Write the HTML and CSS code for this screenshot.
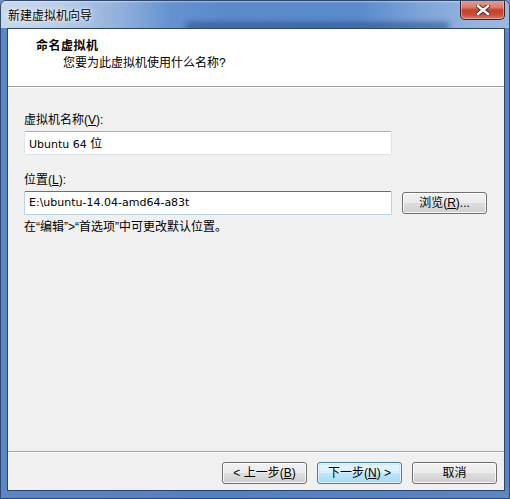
FILE: index.html
```html
<html>
  <head>
    <link rel="stylesheet" href="styles.css">
  </head>
  <body>
    <div class="window">
      <div class="titlebar">
        <span class="caption">新建虚拟机向导</span>
        <div class="blur-band"></div>
        <div class="close-btn">
          <svg width="14" height="10" viewBox="0 0 14 10">
            <path d="M2 1 L12 9 M12 1 L2 9" stroke="#3a2a2a" stroke-width="4.2" stroke-linecap="square"/>
            <path d="M2 1 L12 9 M12 1 L2 9" stroke="#ffffff" stroke-width="2.4" stroke-linecap="square"/>
          </svg>
        </div>
      </div>

      <div class="client">
        <div class="header">
          <div class="header-title">命名虚拟机</div>
          <div class="header-sub">您要为此虚拟机使用什么名称?</div>
        </div>

        <div class="content">
          <label class="field-label">虚拟机名称(<u>V</u>):</label>
          <div class="textbox">Ubuntu 64 <span class="cjk">位</span></div>

          <label class="field-label second">位置(<u>L</u>):</label>
          <div class="row">
            <div class="textbox hover">E:\ubuntu-14.04-amd64-a83t</div>
            <div class="button">浏览(<u>R</u>)...</div>
          </div>
          <div class="hint">在“编辑”&gt;“首选项”中可更改默认位置。</div>
        </div>

        <div class="footer">
          <div class="button">&lt; 上一步(<u>B</u>)</div>
          <div class="button default">下一步(<u>N</u>) &gt;</div>
          <div class="button">取消</div>
        </div>
      </div>
    </div>
  </body>
</html>
```

FILE: styles.css
```css
html, body {
  margin: 0;
  width: 100%;
  height: 100%;
  background: #6f93c9;
  font-family: 'Liberation Sans', 'Noto Sans CJK SC', sans-serif;
  font-size: 12px;
  color: #000;
}

.window {
  width: 510px;
  height: 499px;
  display: flex;
  flex-direction: column;
  box-sizing: border-box;
  border: 1px solid #2f4870;
  border-radius: 6px 6px 0 0;
  background: linear-gradient(90deg, #5a86c6 0%, #5280c5 40%, #5683c6 80%, #5b87c8 100%);
  overflow: hidden;
}

.titlebar {
  position: relative;
  height: 27px;
  flex: none;
  background:
    linear-gradient(180deg, rgba(255,255,255,0.45) 0, rgba(255,255,255,0) 2px),
    linear-gradient(90deg, #c9d7ea 0px, #b9cce6 60px, #90afdc 120px, #6592cf 170px, #5b89ca 220px, #5c8bcb 360px, #7ea4d8 420px, #93b3de 470px, #9ab8e0 509px);
}

.caption {
  position: absolute;
  left: 7px;
  top: 7px;
  line-height: 16px;
  color: #000;
  text-shadow: 0 0 6px #fff, 0 0 3px #fff;
}

.blur-band {
  position: absolute;
  left: 185px;
  right: 60px;
  top: 22px;
  height: 6px;
  background: #24467f;
  filter: blur(3px);
  opacity: 0.75;
}

.close-btn {
  position: absolute;
  right: 4px;
  top: -1px;
  width: 45px;
  height: 20px;
  box-sizing: border-box;
  border: 1px solid #3c2320;
  border-top: none;
  border-radius: 0 0 5px 5px;
  background: linear-gradient(180deg, #e6a293 0%, #d8786a 40%, #c5412c 52%, #c84a35 75%, #d8786a 100%);
  box-shadow: inset 0 0 0 1px rgba(255,220,210,0.45);
  display: flex;
  align-items: center;
  justify-content: center;
}

.client {
  flex: 1;
  margin: 0 4px 7px 6px;
  border: 1px solid #2b4468;
  background: #f0f0f0;
  display: flex;
  flex-direction: column;
}

.header {
  height: 57px;
  background: #fff;
  border-bottom: 1px solid #a0a0a0;
  box-sizing: content-box;
  position: relative;
}

.header-title {
  font-weight: bold;
  margin: 9px 0 0 28px;
  line-height: 16px;
  letter-spacing: 0.5px;
}

.header-sub {
  margin: 1px 0 0 55px;
  line-height: 16px;
}

.content {
  flex: 1;
  border-top: 1px solid #fff;
  padding: 25px 16px 0 16px;
}

.field-label {
  display: block;
  line-height: 15px;
  margin-bottom: 3px;
}

.field-label.second {
  margin-top: 18px;
}

.textbox {
  width: 368px;
  height: 24px;
  box-sizing: border-box;
  border: 1px solid #dde2e8;
  border-top-color: #abadb3;
  border-radius: 2px;
  background: #fff;
  padding: 0 4px;
  line-height: 22px;
  font-family: 'DejaVu Sans', 'Noto Sans CJK SC', sans-serif;
  font-size: 11px;
}

.textbox .cjk {
  font-family: 'Noto Sans CJK SC', sans-serif;
  font-size: 12px;
}

.textbox.hover {
  border-color: #b7d4ea;
  border-top-color: #3d7bad;
}

.row {
  display: flex;
  align-items: center;
  gap: 10px;
}

.hint {
  margin-top: 5px;
  line-height: 15px;
}

.button {
  width: 85px;
  height: 22px;
  box-sizing: border-box;
  border: 1px solid #707070;
  border-radius: 3px;
  background: linear-gradient(180deg, #f2f2f2 0%, #ebebeb 48%, #dddddd 52%, #cfcfcf 100%);
  box-shadow: inset 0 0 0 1px rgba(255,255,255,0.8);
  text-align: center;
  line-height: 20px;
}

.button.default {
  border-color: #3c7fb1;
  background: linear-gradient(180deg, #eaf6fd 0%, #d9f0fc 48%, #bee6fd 52%, #a7d9f5 100%);
  box-shadow: inset 0 0 0 1px rgba(255,255,255,0.7), inset 0 0 2px 1px #9fd4f4;
}

.footer {
  flex: none;
  border-top: 1px solid #a0a0a0;
  box-shadow: inset 0 1px 0 #fff;
  padding: 10px 7px 6px 0;
  display: flex;
  justify-content: flex-end;
  gap: 10px;
}
```
